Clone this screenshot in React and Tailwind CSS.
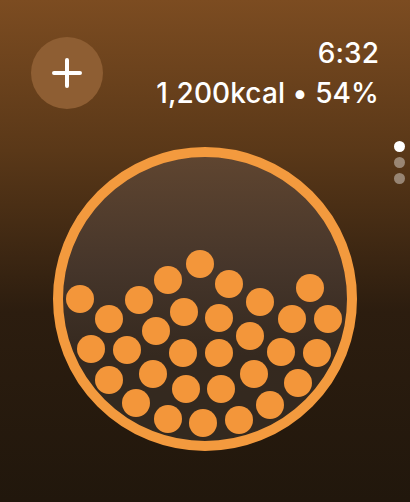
import React from 'react';

// ball centres, page coordinates
const balls = [
  [80, 299], [139, 300], [168, 280], [200, 264], [229, 284], [260, 302], [310, 288],
  [109, 319], [184, 312], [219, 318], [292, 319], [328, 319], [156, 331], [250, 336],
  [91, 349], [127, 350], [183, 353], [219, 353], [281, 352], [317, 353],
  [153, 374], [254, 374], [109, 380], [186, 389], [221, 389], [298, 383],
  [136, 403], [270, 405], [168, 419], [203, 423], [239, 420],
];

export default function App() {
  return (
    <div className="relative h-[502px] w-[410px] overflow-hidden bg-[linear-gradient(180deg,#7c4c21_0%,#5a3818_30%,#2c1d0f_62%,#21170c_100%)] font-['Inter',sans-serif] text-white">
      <div className="flex items-start justify-between pl-[31px] pr-[31px] pt-[33px]">
        <button className="mt-[4px] flex h-[72px] w-[72px] items-center justify-center rounded-full bg-[#8e5e33]">
          <svg width="30" height="30" viewBox="0 0 30 30" fill="none" stroke="white" strokeWidth="4" strokeLinecap="round">
            <path d="M15 2v26M2 15h26" />
          </svg>
        </button>
        <div className="text-right text-[28px] font-medium leading-[40px] tracking-[0.1px]">
          <div>6:32</div>
          <div>1,200kcal • 54%</div>
        </div>
      </div>

      <div className="mt-[34px] flex justify-center">
        <div className="relative h-[304px] w-[304px] overflow-hidden rounded-full border-[10px] border-[#f39a3e] bg-[linear-gradient(180deg,#5f4530_0%,#45352a_40%,#35291f_70%,#33291f_100%)]">
          {balls.map(([x, y], i) => (
            <div
              key={i}
              className="absolute h-[28px] w-[28px] rounded-full bg-[#f3963a]"
              style={{ left: x - 14 - 63, top: y - 14 - 157 }}
            />
          ))}
        </div>
      </div>

      <div className="absolute right-[5px] top-[141px] flex flex-col gap-[5px]">
        <div className="h-[11px] w-[11px] rounded-full bg-white" />
        <div className="h-[11px] w-[11px] rounded-full bg-white/40" />
        <div className="h-[11px] w-[11px] rounded-full bg-white/40" />
      </div>
    </div>
  );
}
